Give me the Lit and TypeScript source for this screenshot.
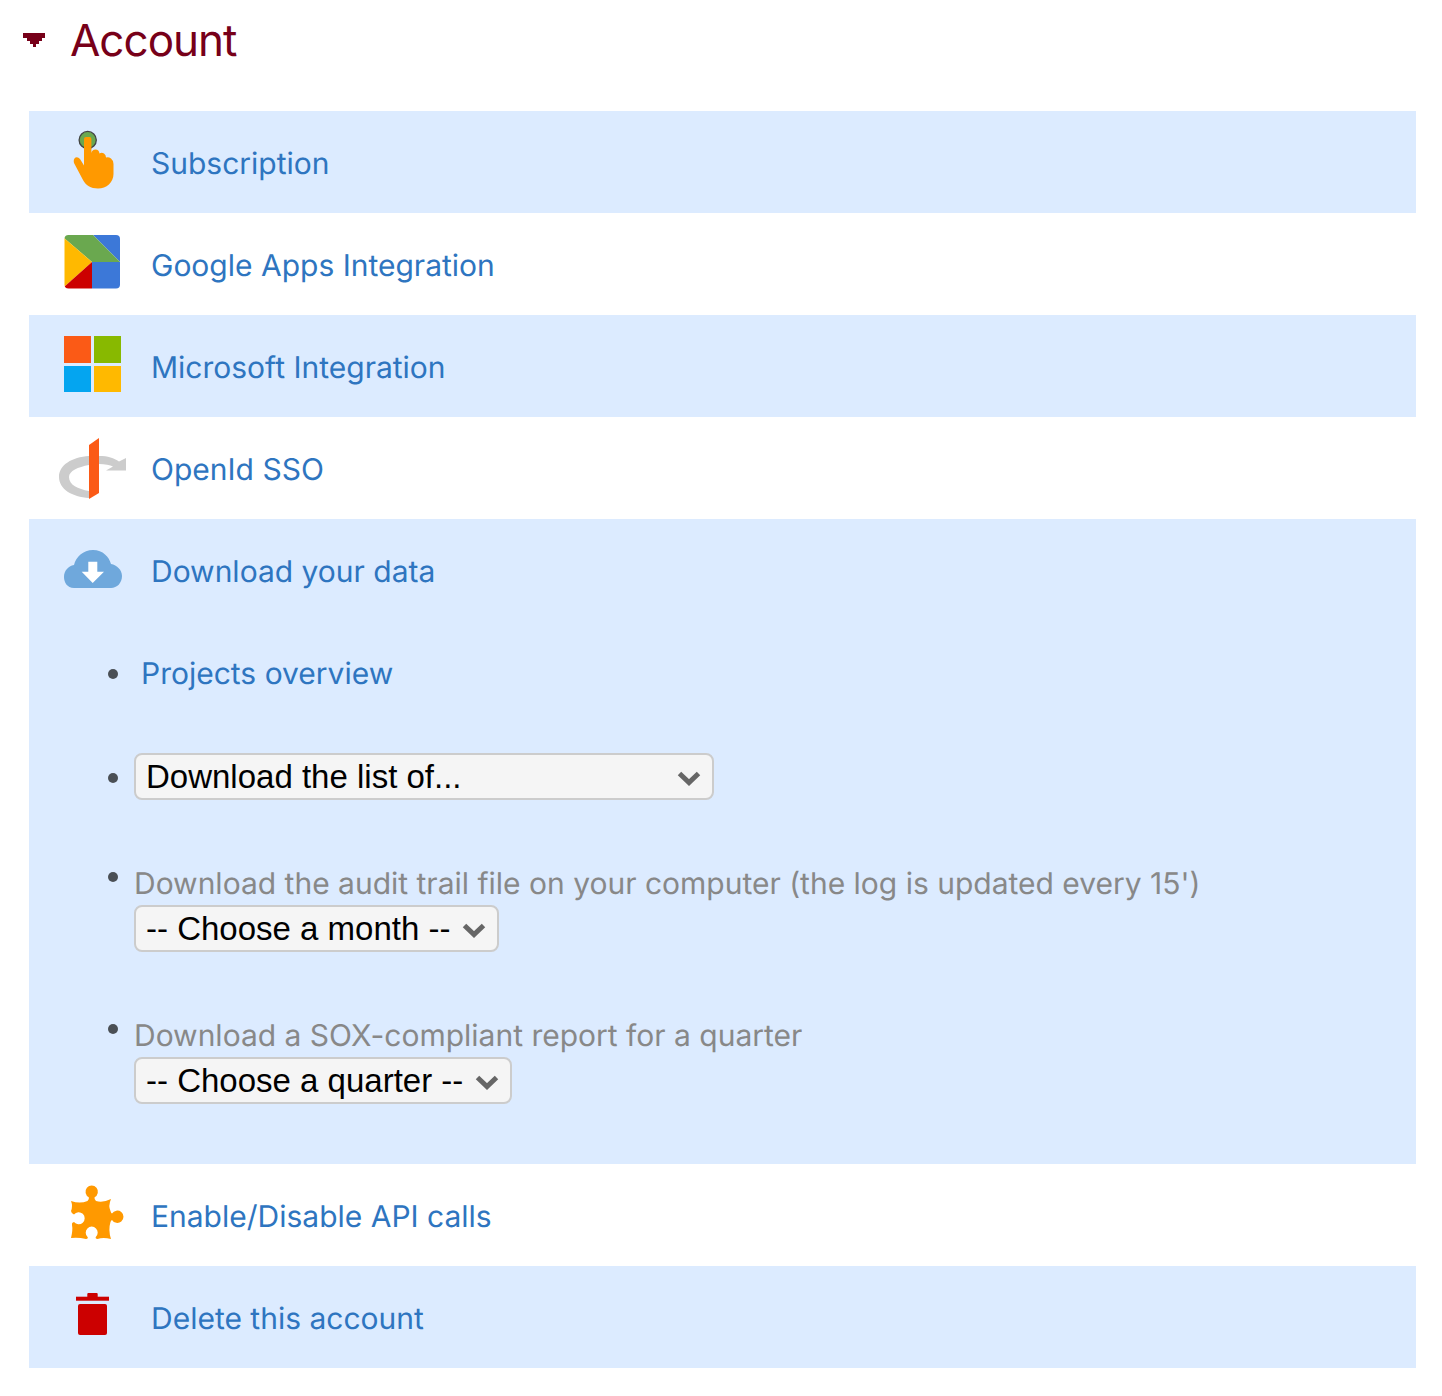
import {LitElement, html, css, svg} from 'lit';
import {customElement} from 'lit/decorators.js';

const icons = {
  hand: svg`
    <circle cx="29.7" cy="13" r="8.6" fill="#6aa84f" stroke="#434343" stroke-width="1.3"/>
    <path fill="#ff9900" d="M26 12 Q26 10 28 10 L31.5 10 Q33.4 10 33.4 12 L33.4 26 Q34 22.5 37.5 22.5 Q41 22.5 41.5 26.5 Q43.5 25 46 26.5 Q48 28 48 30.5 Q50.5 29.5 53 31.5 Q55.5 33.5 55.5 37 L55.5 47 C55.5 55.5 48.5 61.5 40 61.5 C33 61.5 27.5 58 25 53 L16 36 Q15 32 17.5 30.5 Q20 29.5 22 32 L26 38.5 Z"/>`,
  google: svg`
    <defs><clipPath id="g-clip"><rect x="6.5" y="6" width="55.5" height="53.5" rx="4"/></clipPath></defs>
    <g clip-path="url(#g-clip)">
      <rect x="34" y="33" width="28" height="27" fill="#3c78d8"/>
      <polygon points="35,6 62,6 62,33" fill="#3c78d8"/>
      <polygon points="6,6 35,6 62,33 34,33 6,9" fill="#6aa84f"/>
      <polygon points="6,9 34,33 6,58" fill="#ffb900"/>
      <polygon points="34,33 34,60 6,60 6,58" fill="#cc0000"/>
    </g>`,
  microsoft: svg`
    <rect x="6" y="5" width="27" height="27" fill="#fb5a16"/>
    <rect x="36" y="5" width="27" height="27" fill="#88b900"/>
    <rect x="6" y="35" width="27" height="26" fill="#04a5f0"/>
    <rect x="36" y="35" width="27" height="26" fill="#ffb900"/>`,
  openid: svg`
    <path fill="#cccccc" d="M31 65 C14 64 1 56 1 44 C1 32 14 24 31 23 L31 32 C20 34 11 38 11 44 C11 52 20 56 31 58 Z"/>
    <path fill="#cccccc" d="M41 23 C50 23 56 25 61 28.5 L68 25 L68 37.5 L48 37.5 L55 33.5 C52 32 47 31 41 31 Z"/>
    <polygon points="31,12 41,5 41,60 31,66" fill="#fb5a16"/>`,
  cloud: svg`
    <path fill="#6fa8dc" d="M16 53 C9 53 6 47 6 42 C6 36 10 31 16 30 C18 22 25 15 35 15 C45 15 51 22 53 29 C59 30 64 35 64 41 C64 48 59 53 53 53 Z"/>
    <polygon fill="#ffffff" points="30.3,26.7 39.3,26.7 39.3,36.7 46,36.7 34.7,48 23.7,36.7 30.3,36.7"/>`,
  puzzle: svg`
    <path fill="#ff9900" d="M13 21 Q22 24 29.5 21 Q31.5 19.5 30.8 17.2 A6.2 6.2 0 1 1 36.6 17.2 Q36 19.5 38 21 Q45 23 53 19 Q50 26 52.5 31 Q53 33 54 33.5 A6.2 6.2 0 1 1 54 40 Q53 40.5 52.5 42 Q50 50 53 59 Q45 57 39.5 59 Q37 58.5 37.8 57 A6 6 0 1 0 29.6 57 Q30.5 58.5 28 59 Q20 57 13 58 Q15 50 14 45 Q13.5 42.5 16 42 A6 6 0 1 0 16 34.5 Q13.5 34 13 31 Q15 26 13 21 Z"/>`,
  trash: svg`
    <rect x="29.3" y="11" width="10.4" height="5" rx="1" fill="#cc0000"/>
    <rect x="18" y="14.7" width="33" height="4" fill="#cc0000"/>
    <rect x="20" y="22" width="29" height="31" rx="2" fill="#cc0000"/>`,
};

@customElement('app-root')
export class AppRoot extends LitElement {
  static styles = css`
    :host {
      display: block;
      background: #fff;
      font-family: Inter, 'Liberation Sans', sans-serif;
      text-rendering: geometricPrecision;
      min-height: 1396px;
    }

    .header {
      display: flex;
      align-items: center;
      height: 80px;
      padding-left: 22px;
      gap: 24px;
      color: #770019;
      font-size: 44px;
      letter-spacing: -1px;
    }

    .header svg {
      display: block;
    }

    .sections {
      margin: 31px 26px 0 29px;
    }

    .row {
      display: flex;
      align-items: center;
      height: 102px;
      padding-left: 29px;
      gap: 23px;
    }

    .row svg {
      display: block;
      flex: none;
    }

    .shaded {
      background: #dcebff;
    }

    a {
      color: #2e75c0;
      font-size: 30px;
      padding-top: 4px;
      text-decoration: none;
    }

    ul {
      list-style: none;
      margin: 0;
      padding: 0 0 30px 78px;
    }

    li {
      display: grid;
      grid-template-columns: 27px 1fr;
      align-items: center;
    }

    li.link {
      height: 102px;
    }

    li.link a {
      padding-left: 7px;
    }

    li.plain {
      padding: 30px 0;
    }

    li.form {
      align-items: start;
      padding: 39px 0 30px;
    }

    .dot {
      width: 10px;
      height: 10px;
      margin: 3px 0 0 1px;
      border-radius: 50%;
      background: #4a4f55;
    }

    .label {
      color: #888888;
      font-size: 30px;
      line-height: 30px;
      margin-bottom: 6px;
    }

    .select {
      position: relative;
      display: block;
      height: 47px;
    }

    select {
      appearance: none;
      display: block;
      box-sizing: border-box;
      width: 100%;
      height: 47px;
      margin: 0;
      padding: 0 0 0 10px;
      border: 2px solid #cccccc;
      border-radius: 8px;
      background: #f5f5f5;
      color: #000;
      font-family: 'Liberation Sans', Arial, sans-serif;
      font-size: 33px;
    }

    .chevron {
      position: absolute;
      top: 17px;
      right: 13px;
      pointer-events: none;
    }
  `;

  renderIcon(icon: unknown) {
    return html`<svg width="70" height="70" viewBox="0 0 70 70">${icon}</svg>`;
  }

  renderRow(icon: unknown, label: string, shaded = false) {
    return html`<div class="row ${shaded ? 'shaded' : ''}">
      ${this.renderIcon(icon)}
      <a href="#">${label}</a>
    </div>`;
  }

  renderSelect(label: string, width: number) {
    return html`<span class="select" style="width: ${width}px">
      <select><option>${label}</option></select>
      <svg class="chevron" width="24" height="16" viewBox="0 0 24 16">
        <path d="M2.5 3.5 L12 12.5 L21.5 3.5" fill="none" stroke="#666666" stroke-width="5"/>
      </svg>
    </span>`;
  }

  render() {
    return html`
      <div class="header">
        <svg width="24" height="16" viewBox="0 0 24 16" shape-rendering="crispEdges">
          <polygon fill="#770019" points="1,1 23,1 23,6 20,6 20,9 17,9 17,12 14,12 14,15 11,15 11,12 8,12 8,9 5,9 5,6 1,6"/>
        </svg>
        <span>Account</span>
      </div>
      <div class="sections">
        ${this.renderRow(icons.hand, 'Subscription', true)}
        ${this.renderRow(icons.google, 'Google Apps Integration')}
        ${this.renderRow(icons.microsoft, 'Microsoft Integration', true)}
        ${this.renderRow(icons.openid, 'OpenId SSO')}
        <div class="shaded">
          ${this.renderRow(icons.cloud, 'Download your data')}
          <ul>
            <li class="link"><span class="dot"></span><a href="#">Projects overview</a></li>
            <li class="plain"><span class="dot"></span>${this.renderSelect('Download the list of...', 580)}</li>
            <li class="form">
              <span class="dot"></span>
              <div>
                <div class="label">Download the audit trail file on your computer (the log is updated every 15')</div>
                ${this.renderSelect('-- Choose a month --', 365)}
              </div>
            </li>
            <li class="form">
              <span class="dot"></span>
              <div>
                <div class="label">Download a SOX-compliant report for a quarter</div>
                ${this.renderSelect('-- Choose a quarter --', 378)}
              </div>
            </li>
          </ul>
        </div>
        ${this.renderRow(icons.puzzle, 'Enable/Disable API calls')}
        ${this.renderRow(icons.trash, 'Delete this account', true)}
      </div>
    `;
  }
}
